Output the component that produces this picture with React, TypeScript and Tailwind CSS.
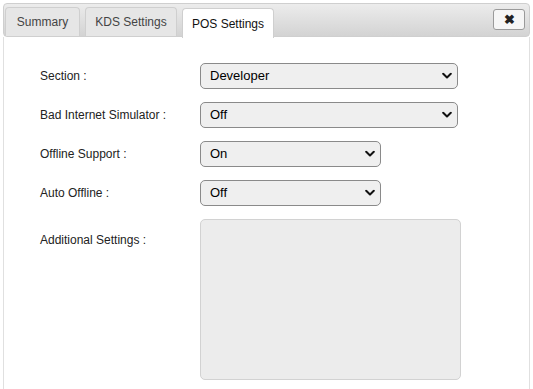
import React, { useState } from 'react';

const Chevron: React.FC = () => (
  <svg width="10" height="7" viewBox="0 0 10 7" className="pointer-events-none absolute right-[6px] top-1/2 -translate-y-1/2">
    <path d="M1.2 1.2 L5 5 L8.8 1.2" fill="none" stroke="#111" strokeWidth="2" strokeLinecap="round" strokeLinejoin="round" />
  </svg>
);

const Select: React.FC<{ value: string; options: string[]; wide?: boolean; onChange: (v: string) => void }> = ({ value, options, wide, onChange }) => (
  <div className={`relative h-[26px] ${wide ? 'w-[258px]' : 'w-[181px]'}`}>
    <select
      value={value}
      onChange={e => onChange(e.target.value)}
      className="h-full w-full appearance-none rounded-[5px] border border-[#8a8a8a] bg-[#efefef] pl-[9px] text-[13px] text-black outline-none"
    >
      {options.map(o => <option key={o}>{o}</option>)}
    </select>
    <Chevron />
  </div>
);

const App: React.FC = () => {
  const [tab, setTab] = useState('pos');
  const [section, setSection] = useState('Developer');
  const [badNet, setBadNet] = useState('Off');
  const [offline, setOffline] = useState('On');
  const [autoOffline, setAutoOffline] = useState('Off');

  const tabs = [
    { id: 'summary', label: 'Summary', w: 'w-[75px]' },
    { id: 'kds', label: 'KDS Settings', w: 'w-[92px]' },
    { id: 'pos', label: 'POS Settings', w: 'w-[92px]' },
  ];

  const rows = [
    { label: 'Section :', el: <Select wide value={section} options={['Developer', 'General', 'Printing']} onChange={setSection} /> },
    { label: 'Bad Internet Simulator :', el: <Select wide value={badNet} options={['Off', 'On']} onChange={setBadNet} /> },
    { label: 'Offline Support :', el: <Select value={offline} options={['On', 'Off']} onChange={setOffline} /> },
    { label: 'Auto Offline :', el: <Select value={autoOffline} options={['Off', 'On']} onChange={setAutoOffline} /> },
  ];

  return (
    <div className="h-[389px] w-[533px] overflow-hidden bg-white pl-[3px] pr-[3px] pt-[3px] text-[#222]" style={{ fontFamily: 'Tahoma, "Liberation Sans", sans-serif' }}>
      <div className="flex h-[34px] items-end rounded-t-[4px] rounded-b-[4px] border border-[#cfcfcf] bg-gradient-to-b from-[#ececec] to-[#d3d3d3] pl-[1px] pr-[4px]">
        <div className="flex items-end gap-[5px]">
          {tabs.map(t => (
            <button
              key={t.id}
              onClick={() => setTab(t.id)}
              className={`${t.w} h-[29px] rounded-t-[4px] border border-b-0 text-[12px] ${tab === t.id ? 'mb-[-2px] h-[30px] border-[#cfcfcf] bg-white text-[#111]' : 'border-[#cfcfcf] bg-[#e6e6e6] text-[#444]'}`}
            >
              {t.label}
            </button>
          ))}
        </div>
        <button className="mb-[6px] ml-auto flex h-[21px] w-[32px] items-center justify-center rounded-[3px] border border-[#9a9a9a] bg-[#f6f6f6]">
          <span className="text-[13px] leading-none font-bold text-[#222]">✖</span>
        </button>
      </div>
      <div className="h-[360px] border-l border-r border-[#e0e0e0] pl-[36px] pt-[26px]">
        <div className="flex flex-col gap-[13px]">
          {rows.map(r => (
            <div key={r.label} className="flex items-center">
              <div className="w-[160px] text-[12px] text-[#222]">{r.label}</div>
              {r.el}
            </div>
          ))}
          <div className="flex items-start">
            <div className="w-[160px] pt-[12px] text-[12px] text-[#222]">Additional Settings :</div>
            <textarea className="h-[161px] w-[261px] resize-none rounded-[5px] border border-[#d2d2d2] bg-[#ececec] outline-none" />
          </div>
        </div>
      </div>
    </div>
  );
};

export default App;
